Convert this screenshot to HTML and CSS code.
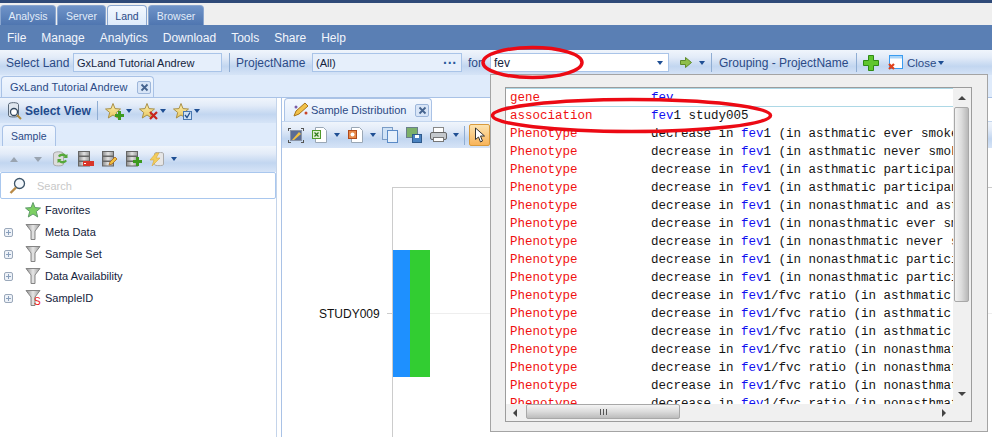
FILE: index.html
```html
<!DOCTYPE html>
<html lang="en">
<head>
    <meta charset="UTF-8">
    <title>GxLand</title>
    <link rel="stylesheet" href="styles.css">
</head>
<body>
    <svg class="sprites" width="0" height="0" aria-hidden="true">
        <defs>
            <linearGradient id="funnel-fill" x1="0" x2="1" y1="0" y2="0">
                <stop offset="0" stop-color="#8d8d8d"/>
                <stop offset="0.5" stop-color="#e6e6e6"/>
                <stop offset="1" stop-color="#9a9a9a"/>
            </linearGradient>
            <linearGradient id="star-fill" x1="0" x2="0" y1="0" y2="1">
                <stop offset="0" stop-color="#fdf0b0"/>
                <stop offset="1" stop-color="#e8c65e"/>
            </linearGradient>
            <linearGradient id="db-fill" x1="0" x2="1" y1="0" y2="0">
                <stop offset="0" stop-color="#8a8a8a"/>
                <stop offset="0.5" stop-color="#e2e2e2"/>
                <stop offset="1" stop-color="#9a9a9a"/>
            </linearGradient>
            <symbol id="star" viewBox="0 0 16 16">
                <polygon points="8,0.5 10,5.6 15.5,6 11.3,9.5 12.7,15 8,12 3.3,15 4.700,9.5 0.5,6 6,5.6" fill="url(#star-fill)" stroke="#a89048"/>
            </symbol>
            <symbol id="funnel" viewBox="0 0 16 16">
                <path d="M1 0.5h14l-5 6.5v8.500h-4v-8.500z" fill="url(#funnel-fill)" stroke="#858585"/>
            </symbol>
            <symbol id="stack" viewBox="0 0 16 16">
                <rect x="1.500" y="0.500" width="11" height="4.500" fill="url(#db-fill)" stroke="#666"/>
                <rect x="1.500" y="5.500" width="11" height="4.500" fill="url(#db-fill)" stroke="#666"/>
                <rect x="1.500" y="10.500" width="11" height="4.500" fill="url(#db-fill)" stroke="#666"/>
            </symbol>
            <symbol id="x-mark" viewBox="0 0 9 9">
                <path d="M1.500 1.500l6 6M7.500 1.500l-6 6" stroke="#46648f" stroke-width="1.800" fill="none"/>
            </symbol>
        </defs>
    </svg>

    <nav class="app-tabs">
        <span class="app-tab tab-analysis">Analysis</span>
        <span class="app-tab tab-server">Server</span>
        <span class="app-tab tab-land app-tab-active">Land</span>
        <span class="app-tab tab-browser">Browser</span>
    </nav>

    <nav class="menu-bar">
        <span>File</span><span>Manage</span><span>Analytics</span><span>Download</span><span>Tools</span><span>Share</span><span>Help</span>
    </nav>

    <div class="filter-bar">
        <span class="bar-label label-land">Select Land</span>
        <span class="field field-land">GxLand Tutorial Andrew</span>
        <i class="bar-sep sep-land"></i>
        <span class="bar-label label-project">ProjectName</span>
        <span class="field field-project">(All)<b class="field-dots">···</b></span>
        <span class="bar-label label-for">for</span>
        <span class="field field-search">fev<i class="caret"></i></span>
        <svg class="go-icon" width="12" height="11" viewBox="0 0 12 11"><path d="M0.500 3.500h5v-3l6 5-6 5v-3h-5z" fill="#8fbf4a" stroke="#5f8a2c"/></svg>
        <i class="caret go-caret"></i>
        <i class="bar-sep"></i>
        <span class="bar-label label-group">Grouping - ProjectName</span>
        <i class="bar-sep"></i>
        <svg class="plus-icon" width="16" height="16" viewBox="0 0 16 16"><path d="M5.500 0.500h5v5h5v5h-5v5h-5v-5h-5v-5h5z" fill="#5fc62e" stroke="#2f8a14"/></svg>
        <svg class="window-icon" width="15" height="16" viewBox="0 0 15 16">
            <rect x="1.500" y="0.500" width="13" height="13" fill="#fff" stroke="#3a9cf0"/>
            <rect x="2" y="1" width="12" height="2.500" fill="#a9d4f8"/>
            <path d="M1 9l5 5M6 9l-5 5" stroke="#e0421c" stroke-width="2.200"/>
        </svg>
        <span class="bar-label label-close">Close</span>
        <i class="caret close-caret"></i>
    </div>

    <div class="doc-tabs">
        <span class="doc-tab">GxLand Tutorial Andrew<span class="tab-close"><svg width="9" height="9"><use href="#x-mark"/></svg></span></span>
    </div>

    <div class="workspace">
        <aside class="side-panel">
            <div class="side-head">
                <svg width="16" height="18" viewBox="0 0 16 18">
                    <path d="M1.500 2.500c0-2.500 10-2.500 10 0v11c0 2-10 2-10 0z" fill="#dfe6ee" stroke="#5c6a7a"/>
                    <circle cx="7" cy="10" r="3.500" fill="#fff" stroke="#34495f" stroke-width="1.300"/>
                    <path d="M10 13l4 4" stroke="#b08a3a" stroke-width="2"/>
                </svg>
                <strong class="side-title">Select View</strong>
                <i class="bar-sep"></i>
                <span class="star-btn">
                    <svg width="16" height="16"><use href="#star"/></svg>
                    <svg class="star-badge" width="9" height="9" viewBox="0 0 9 9"><path d="M3 0h3v3h3v3h-3v3h-3v-3h-3v-3h3z" fill="#3c9a1f"/></svg>
                </span>
                <i class="caret"></i>
                <span class="star-btn">
                    <svg width="16" height="16"><use href="#star"/></svg>
                    <svg class="star-badge" width="9" height="9" viewBox="0 0 9 9"><path d="M1 1l7 7M8 1l-7 7" stroke="#c8261c" stroke-width="2.200"/></svg>
                </span>
                <i class="caret"></i>
                <span class="star-btn">
                    <svg width="16" height="16"><use href="#star"/></svg>
                    <svg class="star-badge" width="9" height="9" viewBox="0 0 9 9"><rect x="0.500" y="0.500" width="8" height="8" fill="#cfe2f6" stroke="#4a78b0"/><path d="M2 4l2 2.500 3-5" stroke="#24508c" stroke-width="1.300" fill="none"/></svg>
                </span>
                <i class="caret"></i>
            </div>
            <div class="side-tabs"><span class="side-tab">Sample</span></div>
            <div class="side-tools">
                <i class="tri-up"></i>
                <i class="tri-down"></i>
                <svg width="17" height="16" viewBox="0 0 17 16">
                    <path d="M1.500 3c0-3 10-3 10 0v10c0 2.500-10 2.500-10 0z" fill="#dcdcdc" stroke="#aaa"/>
                    <path d="M6 5c2-3 6-3 8-1l1.500-1v4h-4l1.200-1.200c-2-1.500-4-1-5 .5zM15 10c-2 3-6 3-8 1l-1.500 1v-4h4l-1.200 1.200c2 1.500 4 1 5-.5z" fill="#55a83a"/>
                </svg>
                <span class="db-btn">
                    <svg width="16" height="16"><use href="#stack"/></svg>
                    <svg class="db-badge" width="11" height="5" viewBox="0 0 11 5"><rect width="11" height="5" fill="#d8352a"/><rect x="1" y="2" width="2" height="1" fill="#fff"/></svg>
                </span>
                <span class="db-btn">
                    <svg width="16" height="16"><use href="#stack"/></svg>
                    <svg class="db-badge" width="10" height="10" viewBox="0 0 10 10"><path d="M1 9l1-3 5-5 2 2-5 5z" fill="#f0c040" stroke="#a8641c" stroke-width="0.800"/></svg>
                </span>
                <span class="db-btn">
                    <svg width="16" height="16"><use href="#stack"/></svg>
                    <svg class="db-badge" width="9" height="9" viewBox="0 0 9 9"><path d="M3 0h3v3h3v3h-3v3h-3v-3h-3v-3h3z" fill="#3c9a1f"/></svg>
                </span>
                <svg width="16" height="15" viewBox="0 0 16 15">
                    <path d="M5.500 1.500c0-1.500 9-1.500 9 0v11c0 1.500-9 1.500-9 0z" fill="#e6e6e6" stroke="#aaa"/>
                    <path d="M7 1l-6 7h4l-2 6 8-8h-4l3-5z" fill="#f2cd5c" stroke="#d8a93a" stroke-width="0.600"/>
                </svg>
                <i class="caret"></i>
            </div>
            <div class="side-search">
                <svg width="17" height="17" viewBox="0 0 17 17">
                    <circle cx="10.500" cy="6.500" r="5" fill="#f4f8fc" stroke="#3d5468" stroke-width="1.300"/>
                    <path d="M7 10.500l-5.500 5.500" stroke="#b98a46" stroke-width="2.400"/>
                </svg>
                <span class="search-hint">Search</span>
            </div>
            <ul class="tree">
                <li>
                    <i class="tree-spacer"></i>
                    <svg class="tree-icon" width="16" height="16" viewBox="0 0 16 16"><polygon points="8,0.500 10,5.600 15.500,6 11.300,9.500 12.700,15 8,12 3.300,15 4.700,9.500 0.500,6 6,5.600" fill="#7ccf62" stroke="#5f9a6a"/></svg>
                    <span>Favorites</span>
                </li>
                <li>
                    <i class="tree-plus"></i>
                    <svg class="tree-icon" width="16" height="16"><use href="#funnel"/></svg>
                    <span>Meta Data</span>
                </li>
                <li>
                    <i class="tree-plus"></i>
                    <svg class="tree-icon" width="16" height="16"><use href="#funnel"/></svg>
                    <span>Sample Set</span>
                </li>
                <li>
                    <i class="tree-plus"></i>
                    <svg class="tree-icon" width="16" height="16"><use href="#funnel"/></svg>
                    <span>Data Availability</span>
                </li>
                <li>
                    <i class="tree-plus"></i>
                    <span class="tree-filter">
                        <svg class="tree-icon" width="16" height="16"><use href="#funnel"/></svg>
                        <b class="filter-s">S</b>
                    </span>
                    <span>SampleID</span>
                </li>
            </ul>
        </aside>

        <section class="chart-panel">
            <div class="chart-tabs">
                <span class="chart-tab">
                    <svg class="chart-tab-icon" width="17" height="16" viewBox="0 0 17 16"><path d="M1 14l2-5 9-8 3 3-9 8z" fill="#f1c24a" stroke="#a8741c"/><circle cx="3" cy="5" r="1.500" fill="#7a5da8"/><circle cx="13" cy="11" r="1.500" fill="#c8452a"/></svg>
                    Sample Distribution
                    <span class="tab-close"><svg width="9" height="9"><use href="#x-mark"/></svg></span>
                </span>
            </div>
            <div class="chart-tools">
                <svg width="16" height="15" viewBox="0 0 16 15">
                    <rect x="2.500" y="2.500" width="11" height="10" fill="#5a6c94" stroke="#8a94a6"/>
                    <path d="M0 0h3v1h-2v2h-1zM13 0h3v3h-1v-2h-2zM0 12h1v2h2v1h-3zM15 12h1v3h-3v-1h2z" fill="#555"/>
                    <path d="M4 12l7-8 2 2-7 6z" fill="#f0c040"/>
                </svg>
                <svg width="16" height="16" viewBox="0 0 16 16">
                    <path d="M3.500 0.500h8l3 3v12h-11z" fill="#fff" stroke="#9aa7b5"/>
                    <rect x="0.500" y="3.500" width="8" height="8" fill="#dff0d0" stroke="#4f9a2c"/>
                    <path d="M2.500 5.500l4 4M6.500 5.500l-4 4" stroke="#2f7a1c" stroke-width="1.200"/>
                </svg>
                <i class="caret"></i>
                <svg width="16" height="16" viewBox="0 0 16 16">
                    <path d="M3.500 0.500h8l3 3v12h-11z" fill="#fff" stroke="#9aa7b5"/>
                    <rect x="0.500" y="3.500" width="8" height="8" fill="#e88a4a" stroke="#b04a1c"/>
                    <circle cx="4.500" cy="7.500" r="2" fill="#fff"/>
                </svg>
                <i class="caret"></i>
                <svg class="copy-icon" width="16" height="16" viewBox="0 0 16 16"><rect x="0.500" y="0.500" width="10" height="12" fill="#cfe2f6" stroke="#7a9cc6"/><rect x="5.500" y="3.500" width="10" height="12" fill="#e6f0fb" stroke="#5a8ac6"/></svg>
                <svg width="16" height="16" viewBox="0 0 16 16"><rect x="0.500" y="0.500" width="11" height="10" fill="#7cb06a" stroke="#6a7f8a"/><rect x="6.500" y="7.500" width="9" height="8" fill="#4a82c0" stroke="#2f5a8c"/><rect x="9" y="8" width="4" height="3" fill="#fff"/></svg>
                <svg width="17" height="16" viewBox="0 0 17 16"><rect x="3.500" y="0.500" width="10" height="6" fill="#fff" stroke="#888"/><rect x="0.500" y="5.500" width="16" height="7" rx="1.500" fill="#c4c8cc" stroke="#666"/><rect x="3.500" y="10.500" width="10" height="4" fill="#fff" stroke="#777"/></svg>
                <i class="caret"></i>
                <i class="bar-sep tools-sep"></i>
                <span class="pointer-btn">
                    <svg width="11" height="16" viewBox="0 0 11 16"><path d="M1.500 1v11.500l3-2.500 2 5 2-1-2-5h4z" fill="#fff" stroke="#333"/></svg>
                </span>
            </div>
            <div class="chart-area">
                <div class="plot-frame"></div>
                <span class="plot-label">STUDY009</span>
                <i class="plot-tick"></i>
                <i class="plot-grid"></i>
                <i class="plot-bar bar-blue"></i>
                <i class="plot-bar bar-green"></i>
            </div>
        </section>
    </div>

    <div class="suggest-popup">
        <div class="suggest-box">
            <ul class="suggest-list">
                <li class="suggest-rule"><span class="kind">gene</span><span><em>fev</em></span></li>
                <li class="suggest-rule"><span class="kind">association</span><span><em>fev</em>1 study005</span></li>
                <li><span class="kind">Phenotype</span><span>decrease in <em>fev</em>1 (in asthmatic ever smokers</span></li>
                <li><span class="kind">Phenotype</span><span>decrease in <em>fev</em>1 (in asthmatic never smokers</span></li>
                <li><span class="kind">Phenotype</span><span>decrease in <em>fev</em>1 (in asthmatic participants</span></li>
                <li><span class="kind">Phenotype</span><span>decrease in <em>fev</em>1 (in asthmatic participants</span></li>
                <li><span class="kind">Phenotype</span><span>decrease in <em>fev</em>1 (in nonasthmatic and asthmatic</span></li>
                <li><span class="kind">Phenotype</span><span>decrease in <em>fev</em>1 (in nonasthmatic ever smokers</span></li>
                <li><span class="kind">Phenotype</span><span>decrease in <em>fev</em>1 (in nonasthmatic never smokers</span></li>
                <li><span class="kind">Phenotype</span><span>decrease in <em>fev</em>1 (in nonasthmatic participants</span></li>
                <li><span class="kind">Phenotype</span><span>decrease in <em>fev</em>1 (in nonasthmatic participants</span></li>
                <li><span class="kind">Phenotype</span><span>decrease in <em>fev</em>1/fvc ratio (in asthmatic ever</span></li>
                <li><span class="kind">Phenotype</span><span>decrease in <em>fev</em>1/fvc ratio (in asthmatic never</span></li>
                <li><span class="kind">Phenotype</span><span>decrease in <em>fev</em>1/fvc ratio (in asthmatic part</span></li>
                <li><span class="kind">Phenotype</span><span>decrease in <em>fev</em>1/fvc ratio (in nonasthmatic ever</span></li>
                <li><span class="kind">Phenotype</span><span>decrease in <em>fev</em>1/fvc ratio (in nonasthmatic never</span></li>
                <li><span class="kind">Phenotype</span><span>decrease in <em>fev</em>1/fvc ratio (in nonasthmatic part</span></li>
                <li><span class="kind">Phenotype</span><span>decrease in <em>fev</em>1/fvc ratio (in nonasthmatic part</span></li>
            </ul>
            <div class="scroll-v">
                <i class="arrow-up"></i>
                <i class="scroll-v-thumb"></i>
                <i class="arrow-down"></i>
            </div>
            <div class="scroll-h">
                <i class="arrow-left"></i>
                <i class="scroll-h-thumb"><b></b></i>
                <i class="arrow-right"></i>
            </div>
        </div>
    </div>

    <!-- hand-drawn red marks on top of the screenshot -->
    <svg class="marks" width="992" height="437" viewBox="0 0 992 437" aria-hidden="true">
        <ellipse cx="532.500" cy="62.500" rx="49.500" ry="15" fill="none" stroke="#ec0a14" stroke-width="3.500"/>
        <ellipse cx="631.500" cy="115.500" rx="139" ry="16" fill="none" stroke="#ec0a14" stroke-width="3.500"/>
    </svg>
</body>
</html>
```

FILE: styles.css
```css
:root {
    --label-color: #2b4a86;
    --field-border: #a9c4e8;
    --pale-blue: #dfebfb;
    --tool-gradient: linear-gradient(to bottom, #f0f5fc 0%, #e2ebf8 30%, #c2d6f0 65%, #d6e4f7 100%);
}

html, body {
    margin: 0;
    height: 437px;
    overflow: hidden;
}

body {
    position: relative;
    font-family: 'Liberation Sans', sans-serif;
    font-size: 11px;
    color: #14233c;
    background: #fff;
}

i, em {
    font-style: normal;
}

.sprites {
    position: absolute;
}

/* top tabs */
.app-tabs {
    display: flex;
    align-items: flex-end;
    gap: 1px;
    height: 19px;
    padding-top: 3px;
    background: #efefef;
    border-top: 3px solid #2f4a78;
}

.app-tab {
    flex: none;
    display: flex;
    align-items: center;
    justify-content: center;
    height: 20px;
    font-size: 10.500px;
    color: #e2ecf9;
    background: linear-gradient(to bottom, #6f93c8, #4f76b0);
    border: 1px solid #8aa6cf;
    border-bottom: none;
    border-radius: 4px 4px 0 0;
    box-sizing: border-box;
}

.tab-analysis {
    width: 56px;
}

.tab-server {
    width: 49px;
}

.tab-land {
    width: 40px;
}

.tab-browser {
    width: 56px;
}

.app-tab-active {
    color: #2b4a86;
    background: linear-gradient(to bottom, #f4f8fe, #dceafb);
}

.menu-bar {
    display: flex;
    align-items: center;
    gap: 15px;
    height: 25px;
    padding-left: 7px;
    font-size: 12px;
    color: #f2f6fc;
    background: #5a7fb4;
}

/* toolbars */
.filter-bar {
    display: flex;
    align-items: center;
    height: 25px;
    padding-left: 6px;
    background: var(--tool-gradient);
}

.bar-label {
    flex: none;
    font-size: 12px;
    color: var(--label-color);
    white-space: nowrap;
}

.label-land {
    width: 67px;
}

.label-project {
    width: 76px;
}

.label-for {
    width: 22px;
}

.label-group {
    width: 130px;
    margin: 0 7px;
}

.label-close {
    width: 31px;
    font-size: 11.500px;
}

.bar-sep {
    flex: none;
    width: 1px;
    height: 19px;
    background: #8fadd3;
}

.field {
    flex: none;
    display: flex;
    align-items: center;
    height: 19px;
    padding-left: 3px;
    background: #fff;
    border: 1px solid var(--field-border);
    box-sizing: border-box;
}

.field-land {
    width: 149px;
    background: #e6effb;
}

.sep-land {
    margin: 0 6px 0 7px;
}

.field-project {
    justify-content: space-between;
    width: 150px;
    margin-right: 6px;
    padding-right: 4px;
    background: #e6effb;
}

.field-dots {
    color: #2b5a9c;
    font-size: 14px;
}

.field-search {
    justify-content: space-between;
    width: 179px;
    padding-right: 5px;
    font-size: 12px;
}

.caret {
    flex: none;
    display: inline-block;
    width: 0;
    height: 0;
    margin-left: 5px;
    border-left: 3px solid transparent;
    border-right: 3px solid transparent;
    border-top: 4px solid #1f4f94;
}

.go-icon {
    flex: none;
    margin-left: 11px;
}

.go-caret {
    margin: 0 6px 0 7px;
}

.plus-icon {
    flex: none;
    margin-left: 6px;
}

.window-icon {
    flex: none;
    margin: 0 4px 0 9px;
}

.close-caret {
    margin-left: 0;
}

.doc-tabs {
    display: flex;
    align-items: flex-end;
    height: 23px;
    padding-left: 1px;
    background: var(--pale-blue);
    border-bottom: 1px solid #a9c2e6;
    box-sizing: border-box;
}

.doc-tab {
    display: flex;
    align-items: center;
    gap: 10px;
    height: 21px;
    padding: 0 2px 0 8px;
    color: var(--label-color);
    background: linear-gradient(to bottom, #f0f6fe, #dfebfb);
    border: 1px solid #a9c2e6;
    border-bottom: none;
    border-radius: 4px 4px 0 0;
    box-sizing: border-box;
}

.tab-close {
    display: flex;
    align-items: center;
    justify-content: center;
    width: 14px;
    height: 13px;
    background: #d8e5f7;
    border: 1px solid #9db6da;
    border-radius: 2px;
    box-sizing: border-box;
}

.workspace {
    display: flex;
    height: 339px;
}

/* left panel */
.side-panel {
    flex: none;
    width: 277px;
    background: #fff;
    border-right: 1px solid #c4d4ea;
    box-sizing: border-box;
}

.side-head {
    display: flex;
    align-items: center;
    height: 25px;
    padding-left: 7px;
    background: var(--tool-gradient);
}

.side-title {
    flex: none;
    width: 64px;
    margin: 0 8px 0 2px;
    color: #1f4a8c;
    font-size: 12px;
    white-space: nowrap;
}

.side-head .bar-sep {
    margin-right: 7px;
}

.side-head .caret {
    margin: 0 7px 0 5px;
}

.star-btn {
    position: relative;
    display: flex;
}

.star-badge {
    position: absolute;
    right: -3px;
    bottom: -1px;
}

.side-tabs {
    display: flex;
    align-items: flex-end;
    height: 23px;
    padding-left: 2px;
    background: var(--pale-blue);
    box-sizing: border-box;
}

.side-tab {
    display: flex;
    align-items: center;
    height: 21px;
    padding: 0 8px;
    font-size: 10.500px;
    color: var(--label-color);
    background: linear-gradient(to bottom, #f4f8fe, #e2edfb);
    border: 1px solid #a9c2e6;
    border-bottom: none;
    border-radius: 4px 4px 0 0;
    box-sizing: border-box;
}

.side-tools {
    display: flex;
    align-items: center;
    gap: 8px;
    height: 26px;
    padding-left: 10px;
    background: var(--tool-gradient);
}

.side-tools .caret {
    margin-left: -2px;
}

.tri-up, .tri-down {
    width: 0;
    height: 0;
    border-left: 4px solid transparent;
    border-right: 4px solid transparent;
}

.tri-up {
    margin-right: 8px;
    border-bottom: 5px solid #9aa4b0;
}

.tri-down {
    margin-right: 2px;
    border-top: 5px solid #9aa4b0;
}

.db-btn {
    position: relative;
    display: flex;
}

.db-badge {
    position: absolute;
    right: -1px;
    bottom: 1px;
}

.side-search {
    display: flex;
    align-items: center;
    height: 27px;
    padding-left: 8px;
    border: 1px solid #a9c7ee;
    border-radius: 2px;
    box-sizing: border-box;
}

.search-hint {
    margin-left: 11px;
    color: #c8c8c8;
}

.tree {
    margin: 0;
    padding: 0;
    list-style: none;
}

.tree li {
    display: flex;
    align-items: center;
    height: 22px;
    padding-left: 4px;
}

.tree-spacer, .tree-plus {
    flex: none;
    width: 9px;
    height: 9px;
    margin-right: 12px;
}

.tree-plus {
    background: linear-gradient(#8aa0bc, #8aa0bc) center / 5px 1px no-repeat,
                linear-gradient(#8aa0bc, #8aa0bc) center / 1px 5px no-repeat,
                #eef2f8;
    border: 1px solid #9aa8ba;
    border-radius: 2px;
    box-sizing: border-box;
}

.tree-icon {
    flex: none;
    margin-right: 4px;
}

.tree-filter {
    position: relative;
    display: flex;
}

.filter-s {
    position: absolute;
    left: 9px;
    top: 6px;
    color: #f01818;
    font-size: 10px;
    font-weight: 400;
}

/* chart panel */
.chart-panel {
    flex: 1;
    min-width: 0;
    margin-left: 4px;
    background: #fff;
    border-left: 1px solid #a9c2e6;
}

.chart-tabs {
    display: flex;
    align-items: flex-end;
    height: 24px;
    padding-left: 2px;
    border-bottom: 1px solid #c4d6ee;
    box-sizing: border-box;
}

.chart-tab {
    display: flex;
    align-items: center;
    height: 23px;
    padding: 0 2px 0 8px;
    color: var(--label-color);
    background: linear-gradient(to bottom, #f4f8fe, #dfebfb);
    border: 1px solid #a9c2e6;
    border-bottom: none;
    border-radius: 4px 4px 0 0;
    box-sizing: border-box;
}

.chart-tab-icon {
    margin-right: 1px;
}

.chart-tab .tab-close {
    margin-left: 9px;
}

.chart-tools {
    display: flex;
    align-items: center;
    gap: 8px;
    height: 26px;
    padding-left: 6px;
    background: var(--tool-gradient);
}

.chart-tools .caret {
    margin-left: -2px;
}

.copy-icon {
    margin-left: -2px;
}

.tools-sep {
    margin-left: -3px;
}

.pointer-btn {
    display: flex;
    align-items: center;
    justify-content: center;
    width: 21px;
    height: 22px;
    margin-left: -4px;
    background: linear-gradient(to bottom, #fce3b0, #f8b45a);
    border: 1px solid #d89a3c;
    border-radius: 2px;
    box-sizing: border-box;
}

.chart-area {
    position: relative;
    height: 289px;
    overflow: hidden;
}

.plot-frame {
    position: absolute;
    left: 110px;
    right: -2px;
    top: 39px;
    bottom: -2px;
    border: 1px solid #ccc;
}

.plot-label {
    position: absolute;
    left: 37px;
    top: 157px;
    font-size: 12px;
    line-height: 18px;
    color: #111;
}

.plot-tick {
    position: absolute;
    left: 105px;
    top: 165px;
    width: 5px;
    height: 1px;
    background: #ccc;
}

.plot-grid {
    position: absolute;
    left: 148px;
    right: 0;
    top: 165px;
    height: 1px;
    background: #eee;
}

.plot-bar {
    position: absolute;
    top: 102px;
    height: 127px;
}

.bar-blue {
    left: 111px;
    width: 17px;
    background: #1e90ff;
}

.bar-green {
    left: 128px;
    width: 20px;
    background: #32cd32;
}

/* suggestion popup */
.suggest-popup {
    position: absolute;
    left: 490px;
    top: 74px;
    width: 498px;
    height: 358px;
    background: #efefef;
    border: 1px solid #a4a4a4;
    box-sizing: border-box;
}

.suggest-box {
    position: absolute;
    left: 14px;
    top: 12px;
    width: 467px;
    height: 335px;
    background: #fff;
    border: 1px solid #9c9c9c;
    box-sizing: border-box;
    overflow: hidden;
}

.suggest-list {
    width: 447px;
    height: 316px;
    margin: 0;
    padding: 0;
    list-style: none;
    overflow: hidden;
    font-family: 'Liberation Mono', monospace;
    font-size: 12.500px;
    color: #141414;
}

.suggest-list li {
    display: flex;
    height: 18px;
    line-height: 20px;
    padding-left: 4px;
    white-space: nowrap;
    box-sizing: border-box;
}

.suggest-list .suggest-rule {
    border-top: 1px solid #add8e6;
    line-height: 18px;
}

.kind {
    flex: none;
    width: 141px;
    color: #f01010;
}

.suggest-list em {
    color: #1010f0;
}

.scroll-v {
    position: absolute;
    right: 0;
    top: 0;
    width: 18px;
    height: 316px;
    background: #f0f0f0;
}

.arrow-up, .arrow-down {
    position: absolute;
    left: 5px;
    width: 0;
    height: 0;
    border-left: 4px solid transparent;
    border-right: 4px solid transparent;
}

.arrow-up {
    top: 8px;
    border-bottom: 4px solid #444;
}

.arrow-down {
    bottom: 8px;
    border-top: 4px solid #444;
}

.scroll-v-thumb {
    position: absolute;
    left: 1px;
    top: 19px;
    width: 15px;
    height: 195px;
    background: linear-gradient(to right, #f2f2f2, #dcdcdc 50%, #b8b8b8);
    border: 1px solid #a8a8a8;
    border-radius: 2px;
    box-sizing: border-box;
}

.scroll-h {
    position: absolute;
    left: 0;
    bottom: 0;
    width: 100%;
    height: 17px;
    background: #f0f0f0;
}

.arrow-left, .arrow-right {
    position: absolute;
    top: 5px;
    width: 0;
    height: 0;
    border-top: 4px solid transparent;
    border-bottom: 4px solid transparent;
}

.arrow-left {
    left: 7px;
    border-right: 4px solid #444;
}

.arrow-right {
    right: 25px;
    border-left: 4px solid #444;
}

.scroll-h-thumb {
    position: absolute;
    left: 20px;
    top: 0;
    width: 154px;
    height: 15px;
    display: flex;
    align-items: center;
    justify-content: center;
    background: linear-gradient(to bottom, #f4f4f4, #dcdcdc 50%, #bcbcbc);
    border: 1px solid #a8a8a8;
    border-radius: 2px;
    box-sizing: border-box;
}

.scroll-h-thumb b {
    width: 7px;
    height: 6px;
    background: repeating-linear-gradient(to right, #555 0 1px, transparent 1px 3px);
}

.marks {
    position: absolute;
    left: 0;
    top: 0;
    pointer-events: none;
}
```
